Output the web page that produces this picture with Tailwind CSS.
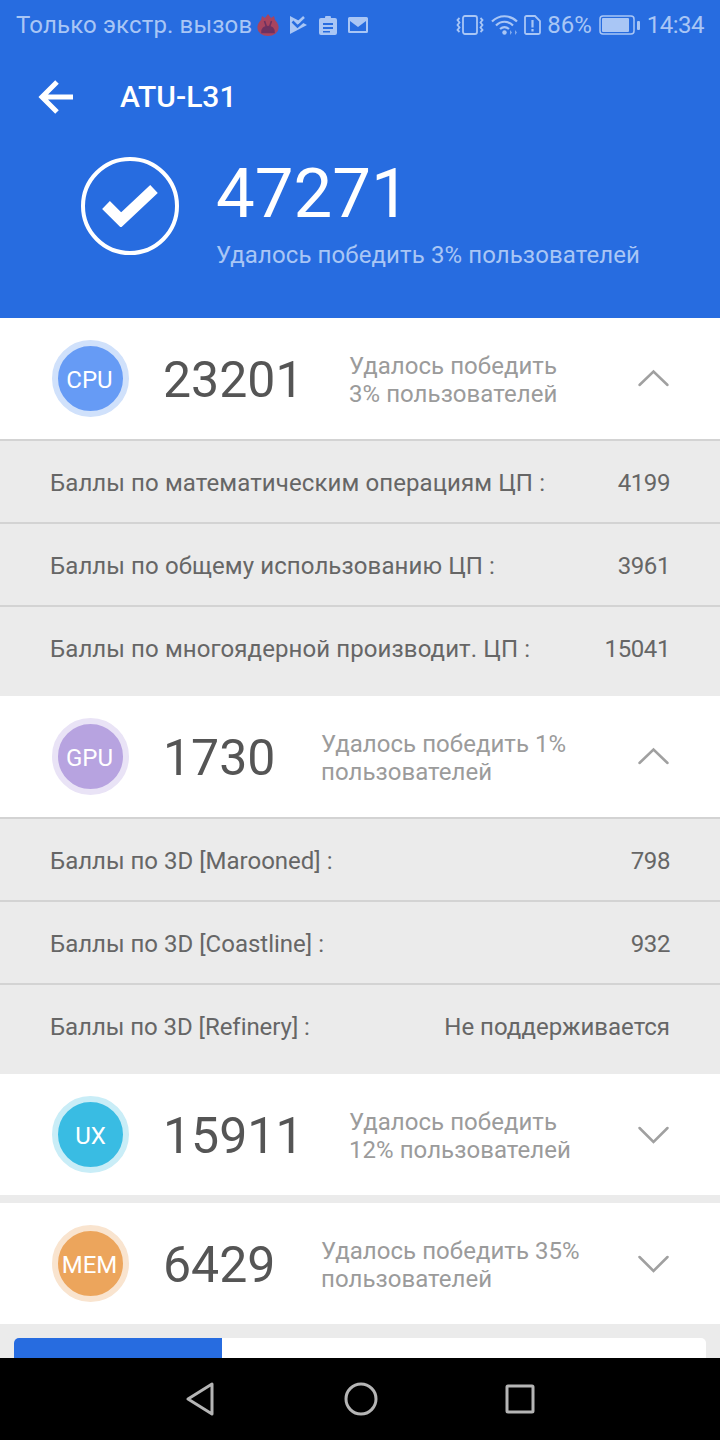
<!DOCTYPE html>
<html lang="ru">
<head>
<meta charset="utf-8">
<script src="https://cdn.jsdelivr.net/npm/@tailwindcss/browser@4"></script>
</head>
<body class="m-0 bg-[#ebebeb]">
<div class="relative w-[720px] h-[1440px] overflow-hidden flex flex-col bg-[#ebebeb] font-['Roboto',sans-serif]">
  <!-- header -->
  <header class="h-[318px] shrink-0 bg-[#276ce0] text-white flex flex-col">
    <div class="h-[50px] flex items-center pl-4 pr-4 text-[#a9c6f5] text-[24px] leading-none">
      <span class="tracking-[0.15px]">Только экстр. вызов</span>
      <svg class="ml-[5px]" width="22" height="22" viewBox="0 0 22 22"><path d="M11 0l3 4 3-2 1 4c3 3 4 6 3.500 8.500a10.500 7.500 0 0 1-21 0C0 12 1 9 4 6l1-4 3 2z" fill="#a8445f"/><path d="M5 18.500c0-4 2.500-6 6-6s6 2 6 6zM7.500 7l2 6M14.500 7l-2 6" fill="#6d3160" stroke="#6d3160" stroke-width="1.600"/></svg>
      <svg class="ml-[11px]" width="17" height="18" viewBox="0 0 17 18"><path d="M0 0l17 9-17 9z" fill="#a9c6f5"/><path d="M2.500 5.500L7.500 10.500 17 2" fill="none" stroke="#276ce0" stroke-width="2.500"/><path d="M7.500 7L14 1" fill="none" stroke="#a9c6f5" stroke-width="2.500"/></svg>
      <svg class="ml-[12px]" width="18" height="19" viewBox="0 0 18 19"><path fill-rule="evenodd" d="M2 2h4a3 3 0 0 1 6 0h4a2 2 0 0 1 2 2v13a2 2 0 0 1-2 2H2a2 2 0 0 1-2-2V4a2 2 0 0 1 2-2zM4 7v2h10V7zM4 11v2h10v-2zM4 15v1.500h7V15z" fill="#a9c6f5"/></svg>
      <svg class="ml-[11px]" width="20" height="16" viewBox="0 0 20 16"><path fill-rule="evenodd" d="M1.500 0h17A1.500 1.500 0 0 1 20 1.500v13a1.500 1.500 0 0 1-1.500 1.500h-17A1.500 1.500 0 0 1 0 14.500v-13A1.500 1.500 0 0 1 1.500 0zM2 4v10h16V4l-8 6z" fill="#a9c6f5"/></svg>
      <span class="flex-1"></span>
      <svg width="28" height="20" viewBox="0 0 28 20" fill="none" stroke="#a9c6f5" stroke-width="1.800"><rect x="7" y="1" width="14" height="18" rx="2"/><path d="M3.500 3l-2 2 2 2.500-2 2.500 2 2.500-2 2.500 2 2M24.500 3l2 2-2 2.500 2 2.500-2 2.500 2 2.500-2 2"/></svg>
      <svg class="ml-[7px]" width="27" height="20" viewBox="0 0 27 20" fill="none" stroke="#a9c6f5" stroke-width="2.200"><path d="M1 6.500c7-7 18-7 25 0M5 10.500c5-5 12-5 17 0M9 14c3-2.500 6-2.500 9 0"/><circle cx="13.500" cy="17.500" r="2.200" fill="#a9c6f5" stroke="none"/><path d="M19 15l2 2.500-2 2.500zM24 15l2 2.500-2 2.500z" fill="#a9c6f5" stroke="none" opacity="0.700"/></svg>
      <svg class="ml-[6px]" width="17" height="20" viewBox="0 0 17 20" fill="none" stroke="#a9c6f5" stroke-width="1.800"><path d="M2.500 1H11l5 5v11.500a1.500 1.500 0 0 1-1.500 1.500h-12A1.500 1.500 0 0 1 1 17.500v-15A1.500 1.500 0 0 1 2.500 1z"/><path d="M8.500 5v7.500M8.500 14v2.500" stroke-width="2.200"/></svg>
      <span class="ml-[6px]">86%</span>
      <svg class="ml-[7px]" width="41" height="20" viewBox="0 0 41 20"><rect x="1" y="1" width="34" height="18" rx="3" fill="none" stroke="#a9c6f5" stroke-width="1.500"/><rect x="3" y="3" width="27" height="14" rx="1" fill="#a9c6f5"/><rect x="38" y="6" width="3" height="9" rx="1" fill="#a9c6f5"/></svg>
      <span class="ml-[7px] tracking-[-0.5px]">14:34</span>
    </div>
    <div class="h-[92px] flex items-center pl-[38px] pt-[2px]">
      <svg width="36" height="34" viewBox="0 0 36 34" fill="none" stroke="#fff" stroke-width="5"><path d="M35 17H6M19 2L4 17l15 15"/></svg>
      <span class="ml-[46px] text-[30px] font-medium leading-none">ATU-L31</span>
    </div>
    <div class="flex items-start pl-[81px] pt-[15px]">
      <div class="w-[98px] h-[98px] rounded-full border-[4px] border-white flex items-center justify-center">
        <svg width="56" height="42" viewBox="0 0 56 42" fill="none" stroke="#fff" stroke-width="11"><path d="M4 20l15 15L52 4"/></svg>
      </div>
      <div class="ml-[37px] mt-[1px]">
        <div class="text-[69px] leading-[72px]">47271</div>
        <div class="mt-[10px] text-[24px] leading-[30px] text-[#a9c6f5] tracking-[0.1px]">Удалось победить 3% пользователей</div>
      </div>
    </div>
  </header>

  <!-- CPU -->
  <section class="h-[121px] shrink-0 bg-white flex items-center pl-[52px] pr-[49px]">
    <div class="w-[77px] h-[77px] shrink-0 rounded-full bg-[#669bf5] border-[6px] border-[#d0e1fb] flex items-center justify-center pt-[2px] pr-[2px] text-white text-[24px]">CPU</div>
    <div class="ml-[34px] w-[186px] pt-[3px] text-[50px] leading-none text-[#555]">23201</div>
    <div class="flex-1 pt-[2px] text-[24px] leading-[28px] text-[#9b9b9b] tracking-[0.05px]">Удалось победить<br>3% пользователей</div>
    <svg width="34" height="20" viewBox="0 0 34 20" fill="none" stroke="#a0a0a0" stroke-width="2.500" stroke-linecap="round"><path d="M2.500 16L16.500 2.500 30.500 16"/></svg>
  </section>
  <div class="h-[257px] shrink-0 bg-[#ebebeb] border-t-2 border-[#d3d3d3] text-[24px] text-[#666] leading-none tracking-[0.1px]">
    <div class="h-[83px] flex items-center justify-between pl-[50px] pr-[50px] pt-[2px] border-b-2 border-[#d3d3d3]"><span>Баллы по математическим операциям ЦП :</span><span class="tracking-[-0.4px]">4199</span></div>
    <div class="h-[83px] flex items-center justify-between pl-[50px] pr-[50px] pt-[2px] border-b-2 border-[#d3d3d3]"><span>Баллы по общему использованию ЦП :</span><span class="tracking-[-0.4px]">3961</span></div>
    <div class="h-[83px] flex items-center justify-between pl-[50px] pr-[50px]"><span>Баллы по многоядерной производит. ЦП :</span><span class="tracking-[-0.4px]">15041</span></div>
  </div>

  <!-- GPU -->
  <section class="h-[121px] shrink-0 bg-white flex items-center pl-[52px] pr-[49px]">
    <div class="w-[77px] h-[77px] shrink-0 rounded-full bg-[#b7a3e0] border-[6px] border-[#e9e3f6] flex items-center justify-center pt-[2px] pr-[2px] text-white text-[24px]">GPU</div>
    <div class="ml-[34px] w-[158px] pt-[3px] text-[50px] leading-none text-[#555]">1730</div>
    <div class="flex-1 pt-[2px] text-[24px] leading-[28px] text-[#9b9b9b] tracking-[0.05px]">Удалось победить 1%<br>пользователей</div>
    <svg width="34" height="20" viewBox="0 0 34 20" fill="none" stroke="#a0a0a0" stroke-width="2.500" stroke-linecap="round"><path d="M2.500 16L16.500 2.500 30.500 16"/></svg>
  </section>
  <div class="h-[257px] shrink-0 bg-[#ebebeb] border-t-2 border-[#d3d3d3] text-[24px] text-[#666] leading-none">
    <div class="h-[83px] flex items-center justify-between pl-[50px] pr-[50px] pt-[2px] border-b-2 border-[#d3d3d3]"><span>Баллы по 3D [Marooned] :</span><span class="tracking-[-0.4px]">798</span></div>
    <div class="h-[83px] flex items-center justify-between pl-[50px] pr-[50px] pt-[2px] border-b-2 border-[#d3d3d3]"><span>Баллы по 3D [Coastline] :</span><span class="tracking-[-0.4px]">932</span></div>
    <div class="h-[83px] flex items-center justify-between pl-[50px] pr-[50px]"><span class="tracking-[-0.05px]">Баллы по 3D [Refinery] :</span><span>Не поддерживается</span></div>
  </div>

  <!-- UX -->
  <section class="h-[121px] shrink-0 bg-white flex items-center pl-[52px] pr-[49px]">
    <div class="w-[77px] h-[77px] shrink-0 rounded-full bg-[#39bce3] border-[6px] border-[#c9edf7] flex items-center justify-center pt-[2px] text-white text-[24px]">UX</div>
    <div class="ml-[34px] w-[186px] pt-[3px] text-[50px] leading-none text-[#555]">15911</div>
    <div class="flex-1 pt-[2px] text-[24px] leading-[28px] text-[#9b9b9b] tracking-[0.05px]">Удалось победить<br>12% пользователей</div>
    <svg width="34" height="20" viewBox="0 0 34 20" fill="none" stroke="#a0a0a0" stroke-width="2.500" stroke-linecap="round"><path d="M2.500 3L16.500 17 30.500 3"/></svg>
  </section>

  <!-- MEM -->
  <section class="mt-[8px] h-[121px] shrink-0 bg-white flex items-center pl-[52px] pr-[49px]">
    <div class="w-[77px] h-[77px] shrink-0 rounded-full bg-[#eca55c] border-[6px] border-[#f9e4cf] flex items-center justify-center pt-[2px] pr-[2px] text-white text-[24px]">MEM</div>
    <div class="ml-[34px] w-[158px] pt-[3px] text-[50px] leading-none text-[#555]">6429</div>
    <div class="flex-1 pt-[2px] text-[24px] leading-[28px] text-[#9b9b9b] tracking-[0.05px]">Удалось победить 35%<br>пользователей</div>
    <svg width="34" height="20" viewBox="0 0 34 20" fill="none" stroke="#a0a0a0" stroke-width="2.500" stroke-linecap="round"><path d="M2.500 3L16.500 17 30.500 3"/></svg>
  </section>

  <!-- tab card -->
  <div class="mt-[14px] mx-[14px] h-[20px] shrink-0 bg-white rounded-t-[5px] overflow-hidden">
    <div class="w-[208px] h-full bg-[#276ce0]"></div>
  </div>

  <!-- nav -->
  <nav class="h-[82px] shrink-0 bg-black flex items-center justify-center gap-[127px] pr-[1px]">
    <svg width="32" height="34" viewBox="0 0 32 34" fill="none" stroke="#b5b5b5" stroke-width="3" stroke-linejoin="round"><path d="M27 2v30L3 17z"/></svg>
    <svg width="34" height="34" viewBox="0 0 34 34" fill="none" stroke="#b5b5b5" stroke-width="3"><circle cx="17" cy="17" r="15"/></svg>
    <svg width="30" height="30" viewBox="0 0 30 30" fill="none" stroke="#b5b5b5" stroke-width="3" stroke-linejoin="round"><rect x="2" y="2" width="26" height="26" rx="1"/></svg>
  </nav>
</div>
</body>
</html>
